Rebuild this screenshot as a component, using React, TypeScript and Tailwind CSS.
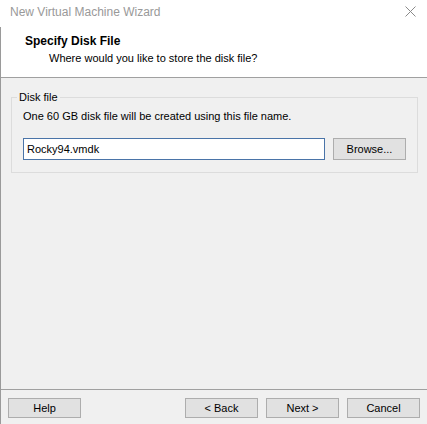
const font = { fontFamily: '"Liberation Sans", Arial, sans-serif' };

function WinButton({ label, className = '' }: { label: string; className?: string }) {
  return (
    <button
      className={`h-[20px] w-[73px] border border-[#adadad] bg-[#e1e1e1] text-[11px] leading-none text-black ${className}`}
    >
      {label}
    </button>
  );
}

export default function App() {
  return (
    <div className="flex h-[424px] w-[427px] flex-col bg-white text-black" style={font}>
      {/* title bar */}
      <div className="flex h-[27px] items-center justify-between pl-[10px] pr-[10px] pb-[6px] pt-[2px]">
        <span className="text-[12px] text-[#999999]">New Virtual Machine Wizard</span>
        <svg width="11" height="11" viewBox="0 0 11 11" className="mr-[1px]">
          <path d="M0.5 0.5 L10.5 10.5 M10.5 0.5 L0.5 10.5" stroke="#8a8a8a" strokeWidth="1" />
        </svg>
      </div>

      <div className="flex flex-1 flex-col border-l border-[#9a9a9a]">
        {/* header */}
        <div className="flex h-[50px] flex-col bg-white pl-[24px] pt-[7px]">
          <div className="text-[12px] font-bold leading-[15px]">Specify Disk File</div>
          <div className="pl-[24px] pt-[2px] text-[11px] leading-[15px]">
            Where would you like to store the disk file?
          </div>
        </div>
        <div className="h-px bg-[#a0a0a0]" />

        {/* body */}
        <div className="flex flex-1 flex-col bg-[#f0f0f0] pl-[10px] pr-[9px] pt-[19px]">
          <div className="relative flex flex-col border border-[#dcdcdc] px-[11px] pb-[12px] pt-[11px]">
            <span className="absolute left-[5px] top-[-8px] bg-[#f0f0f0] px-[2px] text-[11px] leading-[15px]">
              Disk file
            </span>
            <div className="text-[11px] leading-[15px]">
              One 60 GB disk file will be created using this file name.
            </div>
            <div className="mt-[14px] flex items-center gap-[8px]">
              <div className="flex h-[22px] w-[302px] items-center border border-[#4a74a8] bg-white pl-[3px] text-[11px]">
                Rocky94.vmdk
              </div>
              <WinButton label="Browse..." className="h-[22px]" />
            </div>
          </div>
        </div>

        <div className="h-px bg-[#a0a0a0]" />
        {/* footer */}
        <div className="flex h-[34px] items-start bg-[#f0f0f0] pl-[7px] pt-[8px]">
          <WinButton label="Help" />
          <div className="ml-[104px] flex gap-[8px]">
            <WinButton label="< Back" />
            <WinButton label="Next >" />
            <WinButton label="Cancel" />
          </div>
        </div>
      </div>
    </div>
  );
}
